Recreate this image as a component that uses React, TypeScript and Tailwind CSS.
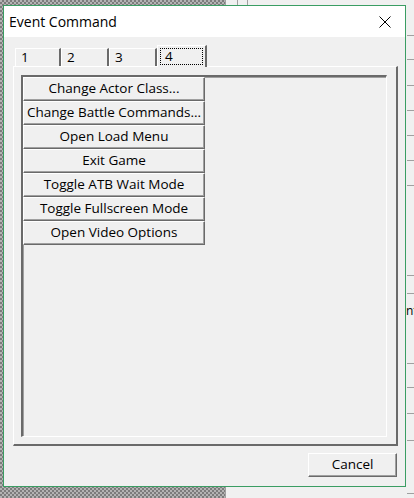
import React from "react";

const font = { fontFamily: '"Open Sans", "Noto Sans", sans-serif' };

function CmdButton({ label }: { label: string }) {
  return (
    <div className="h-[24px] w-[182px] border border-t-white border-l-white border-r-[#6a6a6a] border-b-[#6a6a6a] shadow-[inset_-1px_-1px_0_#a0a0a0] bg-[#f0f0f0] flex items-center justify-center text-[13.5px] text-black leading-none whitespace-nowrap">
      {label}
    </div>
  );
}

function Tab({ label, w, selected }: { label: string; w: number; selected?: boolean }) {
  if (selected) {
    return (
      <div
        className="relative z-10 h-[22px] -mb-[1px] border-t border-l border-t-white border-l-white border-r-2 border-r-[#6a6a6a] bg-[#f0f0f0] px-[2px] pt-[2px]"
        style={{ width: w }}
      >
        <div className="h-[17px] border border-dotted border-black flex items-center pl-[4px] text-[13.5px] leading-none">
          {label}
        </div>
      </div>
    );
  }
  return (
    <div
      className="h-[18px] border-t border-l border-t-white border-l-white border-r-2 border-r-[#6a6a6a] bg-[#f0f0f0] flex items-center pl-[5px] pt-[1px] text-[13.5px] leading-none"
      style={{ width: w }}
    >
      {label}
    </div>
  );
}

export default function App() {
  const cmds = [
    "Change Actor Class...",
    "Change Battle Commands...",
    "Open Load Menu",
    "Exit Game",
    "Toggle ATB Wait Mode",
    "Toggle Fullscreen Mode",
    "Open Video Options",
  ];
  const backLines = [35, 59, 85, 110, 135, 160, 185, 275, 293, 363, 387, 413, 440, 493];
  return (
    <div
      className="relative w-[414px] h-[498px] overflow-hidden bg-[repeating-conic-gradient(#7c7c7c_0%_25%,#b3b3b3_0%_50%)] bg-[length:4px_4px]"
      style={font}
    >
      {/* window behind */}
      <div className="absolute left-[225px] top-0 right-0 bottom-0 bg-[#f0f0f0] border-l border-l-[#a0a0a0]">
        <div className="absolute left-[11px] top-0 h-[6px] w-px bg-[#a0a0a0]" />
        <div className="absolute left-[21px] top-0 h-[6px] w-px bg-[#a0a0a0]" />
        {backLines.map((y) => (
          <div key={y} className="absolute left-[181px] right-0 h-px bg-[#a0a0a0]" style={{ top: y }} />
        ))}
        <div className="absolute left-[180px] top-[305px] text-[12px] text-black leading-none">nt</div>
      </div>

      {/* dialog */}
      <div className="absolute left-[3px] top-[5px] w-[403px] h-[482px] border border-[#3a9d63] bg-[#f0f0f0] flex flex-col">
        <div className="h-[31px] shrink-0 bg-white flex items-center justify-between pl-[5px] pr-[14px]">
          <span className="text-[14px] text-black leading-none">Event Command</span>
          <svg width="12" height="12" viewBox="0 0 12 12" className="block">
            <path d="M0.5 0.5 L11.5 11.5 M11.5 0.5 L0.5 11.5" stroke="#000" strokeWidth="1" fill="none" />
          </svg>
        </div>

        <div className="flex-1 flex flex-col pl-[9px] pr-[7px] pt-[7px]">
          {/* tabs */}
          <div className="flex items-end pl-[2px] h-[22px]">
            <Tab label="1" w={46} />
            <Tab label="2" w={48} />
            <Tab label="3" w={48} />
            <Tab label="4" w={50} selected />
          </div>
          {/* panel */}
          <div className="h-[380px] border border-t-white border-l-white border-r-2 border-b-2 border-r-[#6a6a6a] border-b-[#6a6a6a] pl-[7px] pt-[8px] pr-[9px] pb-[7px] flex">
            <div className="flex-1 border-t-2 border-l-2 border-b border-r border-t-[#6a6a6a] border-l-[#6a6a6a] border-b-white border-r-white shadow-[inset_1px_1px_0_#a0a0a0] bg-[#f0f0f0] flex flex-col items-start">
              {cmds.map((c) => (
                <CmdButton key={c} label={c} />
              ))}
            </div>
          </div>
          {/* footer */}
          <div className="flex justify-end pt-[7px] pr-[1px]">
            <div className="w-[89px] h-[24px] border border-t-white border-l-white border-r-[#6a6a6a] border-b-[#6a6a6a] shadow-[inset_-1px_-1px_0_#a0a0a0] flex items-center justify-center text-[13.5px] leading-none">
              Cancel
            </div>
          </div>
        </div>
      </div>
    </div>
  );
}
